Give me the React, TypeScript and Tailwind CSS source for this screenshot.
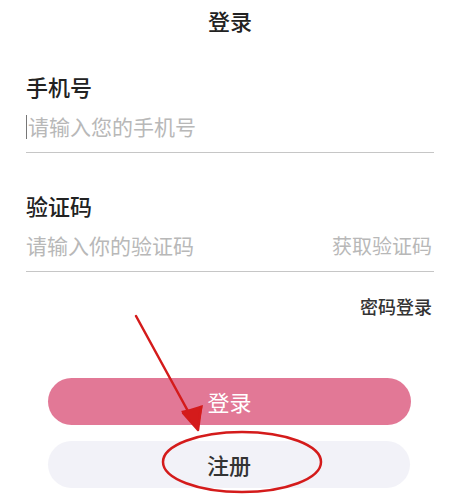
import React from "react";

const cjk = { fontFamily: '"Noto Sans CJK SC", "Noto Sans", sans-serif' };

const Field = ({ label, placeholder, action, cursor, className = "" }: { label: string; placeholder: string; action?: string; cursor?: boolean; className?: string }) => (
  <div className={className}>
    <div className="h-[30px] text-[22px] font-medium leading-[30px] text-[#222]">{label}</div>
    <div className="mt-[11px] flex h-[30px] items-center justify-between border-b border-[#c6c6c6] pb-[10px] box-content">
      <div className="flex items-center text-[21px] text-[#b8b8b8]">
        {cursor && <span className="mr-px h-[24px] w-px bg-[#777]" />}
        {placeholder}
      </div>
      {action && <span className="pr-[2px] text-[20px] text-[#b8b8b8]">{action}</span>}
    </div>
  </div>
);

export default function App() {
  return (
    <div className="relative h-[500px] w-[450px] overflow-hidden bg-white" style={cjk}>
      <div className="h-[40px] text-center text-[22px] font-medium leading-[40px] text-[#222]">
        <span className="ml-[10px]">登录</span>
      </div>

      <div className="pl-[26px] pr-[16px]">
        <Field label="手机号" placeholder="请输入您的手机号" cursor className="mt-[31px]" />
        <Field label="验证码" placeholder="请输入你的验证码" action="获取验证码" className="mt-[37px]" />
        <div className="mt-[21px] flex justify-end">
          <span className="h-[26px] pr-[2px] text-[18px] font-medium leading-[26px] text-[#333]">密码登录</span>
        </div>

        <button className="ml-[22px] mt-[59px] flex h-[47px] w-[363px] items-center justify-center rounded-full bg-[#e27896] text-[22px] text-white">
          登录
        </button>
        <button className="ml-[22px] mt-[16px] flex h-[47px] w-[362px] items-center justify-center rounded-full bg-[#f2f2f8] text-[22px] font-medium text-[#333]">
          注册
        </button>
      </div>

      {/* annotation: arrow + circle */}
      <svg className="pointer-events-none absolute left-0 top-0" width="450" height="500" viewBox="0 0 450 500">
        <line x1="136" y1="316" x2="195" y2="424" stroke="#d41b1b" strokeWidth="2.5" strokeLinecap="round" />
        <path d="M198 430 L181 411 L190 409 L203 405 Z" fill="#d41b1b" />
        <path d="M198 430 L183 413 M198 430 L201 407" stroke="#d41b1b" strokeWidth="2.5" strokeLinecap="round" fill="none" />
        <ellipse cx="242" cy="462" rx="79" ry="30" fill="none" stroke="#d41b1b" strokeWidth="2.5" />
      </svg>
    </div>
  );
}
